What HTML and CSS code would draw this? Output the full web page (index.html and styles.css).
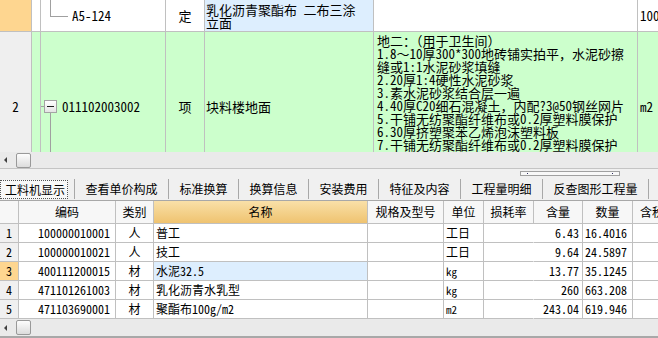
FILE: index.html
```html
<!DOCTYPE html>
<html>
<head>
<meta charset="utf-8">
<link rel="stylesheet" href="styles.css">
</head>
<body>
<div class="app">
  <div class="top">
    <div class="trow r1">
      <div class="c c0 sel"></div>
      <div class="c c1"></div>
      <div class="c c2 child"><span class="code">A5-124</span></div>
      <div class="c c3 center">定</div>
      <div class="c c4 blue">乳化沥青聚酯布&ensp;二布三涂<br>立面</div>
      <div class="c c5"></div>
      <div class="c c6">100m2</div>
    </div>
    <div class="trow r2">
      <div class="c c0 gray center">2</div>
      <div class="c c1 green"></div>
      <div class="c c2 green parent"><span class="box"><span class="minus"></span></span><span class="code">011102003002</span></div>
      <div class="c c3 green center">项</div>
      <div class="c c4 green">块料楼地面</div>
      <div class="c c5 green desc">地二：（用于卫生间）<br>1.8～10厚300*300地砖铺实拍平，水泥砂擦<br>缝或1:1水泥砂浆填缝<br>2.20厚1:4硬性水泥砂浆<br>3.素水泥砂浆结合层一遍<br>4.40厚C20细石混凝土，内配?3@50钢丝网片<br>5.干铺无纺聚酯纤维布或0.2厚塑料膜保护<br>6.30厚挤塑聚苯乙烯泡沫塑料板<br>7.干铺无纺聚酯纤维布或0.2厚塑料膜保护<br>8.1:3水泥砂浆找坡层</div>
      <div class="c c6 green">m2</div>
    </div>
  </div>
  <div class="hscroll"><span class="arrow"></span><span class="thumb"></span></div>
  <div class="split"><span class="grip"><i></i><i></i></span></div>
  <div class="tabs">
    <span class="tab active">工料机显示</span><span class="sep"></span>
    <span class="tab">查看单价构成</span><span class="sep"></span>
    <span class="tab">标准换算</span><span class="sep"></span>
    <span class="tab">换算信息</span><span class="sep"></span>
    <span class="tab">安装费用</span><span class="sep"></span>
    <span class="tab">特征及内容</span><span class="sep"></span>
    <span class="tab">工程量明细</span><span class="sep"></span>
    <span class="tab">反查图形工程量</span><span class="sep"></span>
  </div>
  <div class="bgrid">
    <div class="brow head">
      <div class="d"></div>
      <div class="d ctr">编码</div>
      <div class="d ctr">类别</div>
      <div class="d ctr hsel">名称</div>
      <div class="d ctr">规格及型号</div>
      <div class="d ctr">单位</div>
      <div class="d ctr">损耗率</div>
      <div class="d ctr">含量</div>
      <div class="d ctr">数量</div>
      <div class="d lft last">含税价</div>
    </div>
    <div class="brow">
      <div class="d idx">1</div>
      <div class="d rgt">100000010001</div>
      <div class="d ctr">人</div>
      <div class="d lft">普工</div>
      <div class="d"></div>
      <div class="d lft">工日</div>
      <div class="d nob"></div>
      <div class="d rgt">6.43</div>
      <div class="d lft">16.4016</div>
      <div class="d"></div>
    </div>
    <div class="brow">
      <div class="d idx">2</div>
      <div class="d rgt">100000010021</div>
      <div class="d ctr">人</div>
      <div class="d lft">技工</div>
      <div class="d"></div>
      <div class="d lft">工日</div>
      <div class="d nob"></div>
      <div class="d rgt">9.64</div>
      <div class="d lft">24.5897</div>
      <div class="d"></div>
    </div>
    <div class="brow">
      <div class="d idx cur">3</div>
      <div class="d rgt">400111200015</div>
      <div class="d ctr">材</div>
      <div class="d lft blue">水泥32.5</div>
      <div class="d"></div>
      <div class="d lft small">kg</div>
      <div class="d nob"></div>
      <div class="d rgt">13.77</div>
      <div class="d lft">35.1245</div>
      <div class="d"></div>
    </div>
    <div class="brow">
      <div class="d idx">4</div>
      <div class="d rgt">471101261003</div>
      <div class="d ctr">材</div>
      <div class="d lft">乳化沥青水乳型</div>
      <div class="d"></div>
      <div class="d lft small">kg</div>
      <div class="d nob"></div>
      <div class="d rgt">260</div>
      <div class="d lft">663.208</div>
      <div class="d"></div>
    </div>
    <div class="brow">
      <div class="d idx">5</div>
      <div class="d rgt">471103690001</div>
      <div class="d ctr">材</div>
      <div class="d lft">聚酯布100g/m2</div>
      <div class="d"></div>
      <div class="d lft small">m2</div>
      <div class="d nob"></div>
      <div class="d rgt">243.04</div>
      <div class="d lft">619.946</div>
      <div class="d"></div>
    </div>
  </div>
  <div class="hscroll bottom"><span class="arrow"></span><span class="thumb"></span></div>
</div>
</body>
</html>
```

FILE: styles.css
```css
* { box-sizing: border-box; margin: 0; padding: 0; }
html, body { width: 658px; height: 338px; overflow: hidden; background: #f0f0f0; }
body {
  font-family: "Noto Sans Mono CJK SC", "Noto Sans CJK SC", sans-serif;
  font-size: 12px;
  color: #000;
}
.app { display: flex; flex-direction: column; width: 658px; height: 338px; overflow: hidden; }

/* upper grid */
.top { height: 152px; flex: none; overflow: hidden; background: #fff; }
.trow { display: grid; grid-template-columns: 32px 9px 125px 39px 169px 264px 80px; width: 718px; }
.r1 { height: 32px; }
.r2 { height: 149px; }
.c {
  position: relative;
  display: flex;
  align-items: center;
  border-right: 1px solid #c0c0c0;
  border-bottom: 1px solid #c0c0c0;
  font-size: 13px;
  line-height: 13px;
  white-space: nowrap;
  overflow: hidden;
  background: #fff;
}
.c.center { justify-content: center; }
.c.sel { background: #fed690; }
.c.gray { background: #efefef; }
.c.green { background: #ccffcc; }
.c.blue { background: #ddeefe; }
.c4 { padding-left: 1px; }
.c6 { padding-left: 2px; }
.c.desc { align-items: flex-start; padding: 2px 0 0 3px; }

.child { padding-left: 31px; }
.child::before {
  content: "";
  position: absolute;
  left: 9px;
  top: 0;
  width: 17px;
  height: 16px;
  border-left: 1px solid #a0a0a0;
  border-bottom: 1px solid #a0a0a0;
}
.parent { padding-left: 3px; }
.parent::before {
  content: "";
  position: absolute;
  left: 0;
  top: 50%;
  width: 3px;
  border-top: 1px solid #a0a0a0;
}
.parent::after {
  content: "";
  position: absolute;
  left: 9px;
  top: calc(50% + 7px);
  bottom: 0;
  border-left: 1px solid #a0a0a0;
}
.box {
  width: 13px;
  height: 13px;
  margin-right: 5px;
  border: 1px solid #a4a4a4;
  background: linear-gradient(#ffffff, #e4e4e4);
  display: flex;
  align-items: center;
  justify-content: center;
  flex: none;
}
.minus { width: 7px; height: 1px; background: #202020; }

/* scrollbars */
.hscroll {
  height: 16px;
  flex: none;
  display: flex;
  align-items: center;
  background: #eaeaea;
}
.hscroll.bottom { height: 19px; border-bottom: 2px solid #a8a8a8; align-items: flex-start; padding-top: 1px; }
.arrow {
  width: 0;
  height: 0;
  margin-left: 4px;
  border-right: 3px solid #404040;
  border-top: 3px solid transparent;
  border-bottom: 3px solid transparent;
}
.hscroll.bottom .arrow { margin-top: 5px; }
.thumb {
  width: 15px;
  height: 15px;
  margin-left: 9px;
  border: 1px solid #999;
  border-radius: 2px;
  background: linear-gradient(#fdfdfd, #dcdcdc);
}

/* splitter */
.split {
  height: 10px;
  flex: none;
  border-top: 1px solid #c4c4c4;
  display: flex;
  align-items: center;
  padding-left: 520px;
  background: #f0f0f0;
}
.grip {
  width: 100px;
  height: 5px;
  border: 1px solid #a0a0a0;
  background: #f8f8f8;
  display: flex;
  align-items: center;
  justify-content: space-between;
  padding: 0 6px;
}
.grip i { width: 1px; height: 1px; background: #303060; }

/* tabs */
.tabs {
  height: 23px;
  flex: none;
  display: flex;
  align-items: center;
  border-bottom: 1px solid #a8a8a8;
  background: #f0f0f0;
  white-space: nowrap;
}
.tab { padding: 0 10.5px; height: 19px; line-height: 18px; }
.tab.active { padding: 0 2px 0 4px; border: 1px dotted #555; margin-right: 6px; background: #f8f8f8; }
.sep { width: 1px; height: 20px; background: #a8a8a8; flex: none; }

/* lower grid */
.bgrid { flex: none; background: #fff; }
.brow { display: grid; grid-template-columns: 19px 97px 38px 214px 76px 40px 50px 49px 50px 80px; width: 713px; height: 19px; }
.brow.head { height: 23px; background: #f7f7f7; }
.d {
  display: flex;
  align-items: center;
  border-right: 1px solid #c0c0c0;
  border-bottom: 1px solid #c0c0c0;
  white-space: nowrap;
  overflow: hidden;
  line-height: 14px;
}
.d.nob { border-right-color: transparent; }
.d.ctr { justify-content: center; }
.d.rgt { justify-content: flex-end; padding-right: 3px; }
.brow > .d:nth-child(2).rgt { padding-right: 5px; }
.d.lft { padding-left: 2px; }
.d.lft.last { padding-left: 7px; }
.d.idx { justify-content: center; background: #f0f0f0; }
.d.cur { background: #fed690; }
.d.blue { background: #ddeefe; }
.d.hsel { background: linear-gradient(#f9e0a8, #efc370); }
.d.small { font-size: 11px; }
```
